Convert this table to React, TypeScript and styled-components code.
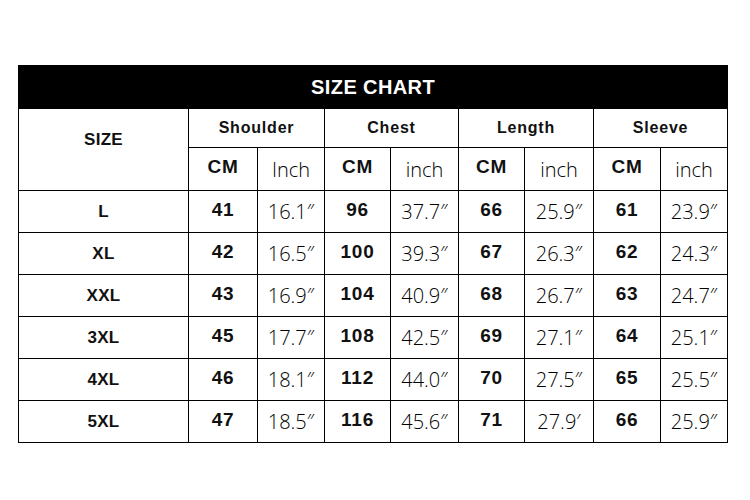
import { createGlobalStyle } from 'styled-components';
import styled from 'styled-components';

const GlobalStyle = createGlobalStyle`
  html, body {
    margin: 0;
    padding: 0;
    background: #fff;
  }
`;

const rows = [
  { size: 'L', v: [['41', '16.1″'], ['96', '37.7″'], ['66', '25.9″'], ['61', '23.9″']] },
  { size: 'XL', v: [['42', '16.5″'], ['100', '39.3″'], ['67', '26.3″'], ['62', '24.3″']] },
  { size: 'XXL', v: [['43', '16.9″'], ['104', '40.9″'], ['68', '26.7″'], ['63', '24.7″']] },
  { size: '3XL', v: [['45', '17.7″'], ['108', '42.5″'], ['69', '27.1″'], ['64', '25.1″']] },
  { size: '4XL', v: [['46', '18.1″'], ['112', '44.0″'], ['70', '27.5″'], ['65', '25.5″']] },
  { size: '5XL', v: [['47', '18.5″'], ['116', '45.6″'], ['71', '27.9′'], ['66', '25.9″']] },
];

const groups = [
  { name: 'Shoulder', unit: 'Inch' },
  { name: 'Chest', unit: 'inch' },
  { name: 'Length', unit: 'inch' },
  { name: 'Sleeve', unit: 'inch' },
];

const colWidths = [170, 69, 67, 66, 68, 66, 69, 67, 67];

function App() {
  return (
    <Page>
      <GlobalStyle />
      <Chart>
        <colgroup>
          {colWidths.map((w, i) => (
            <col key={i} style={{ width: w }} />
          ))}
        </colgroup>
        <thead>
          <tr>
            <Title colSpan={9}>SIZE CHART</Title>
          </tr>
          <GroupRow>
            <SizeHead rowSpan={2}>SIZE</SizeHead>
            {groups.map((g) => (
              <GroupHead key={g.name} colSpan={2}>
                {g.name}
              </GroupHead>
            ))}
          </GroupRow>
          <UnitRow>
            {groups.map((g) => [
              <Cm key={g.name + 'cm'} as="th">CM</Cm>,
              <Inch key={g.name + 'in'} as="th">{g.unit}</Inch>,
            ])}
          </UnitRow>
        </thead>
        <tbody>
          {rows.map((r) => (
            <DataRow key={r.size}>
              <SizeCell>{r.size}</SizeCell>
              {r.v.map(([cm, inch], i) => [
                <Cm key={i + 'c'}>{cm}</Cm>,
                <Inch key={i + 'i'}>{inch}</Inch>,
              ])}
            </DataRow>
          ))}
        </tbody>
      </Chart>
    </Page>
  );
}

export default App;

const Page = styled.div`
  padding: 65px 0 0 18px;
`;

const Chart = styled.table`
  border-collapse: collapse;
  table-layout: fixed;
  width: 709px;
  color: #111;
  td,
  th {
    border: 1px solid #000;
    padding: 0;
    text-align: center;
  }
`;

const Title = styled.th`
  height: 42px;
  background: #000;
  color: #fff;
  font-family: 'Liberation Sans', Arial, sans-serif;
  font-weight: 700;
  font-size: 20px;
  letter-spacing: 0.4px;
`;

const GroupRow = styled.tr`
  height: 39px;
`;

const UnitRow = styled.tr`
  height: 43px;
`;

const DataRow = styled.tr`
  height: 42px;
`;

const SizeHead = styled.th`
  font-family: 'Liberation Sans', Arial, sans-serif;
  font-weight: 700;
  font-size: 17px;
  letter-spacing: 0.3px;
  padding-bottom: 20px !important;
`;

const GroupHead = styled.th`
  font-family: 'Liberation Sans', Arial, sans-serif;
  font-weight: 700;
  font-size: 16px;
  letter-spacing: 0.8px;
`;

const SizeCell = styled.td`
  font-family: 'Liberation Sans', Arial, sans-serif;
  font-weight: 700;
  font-size: 17px;
  letter-spacing: 0.3px;
`;

const Cm = styled.td`
  font-family: 'Liberation Sans', Arial, sans-serif;
  font-weight: 700;
  font-size: 19px;
  letter-spacing: 0.8px;
  padding-bottom: 4px !important;
`;

const Inch = styled.td`
  font-family: 'Open Sans', 'Noto Sans', sans-serif;
  font-weight: 300;
  font-size: 20px;
  color: #000;
`;
